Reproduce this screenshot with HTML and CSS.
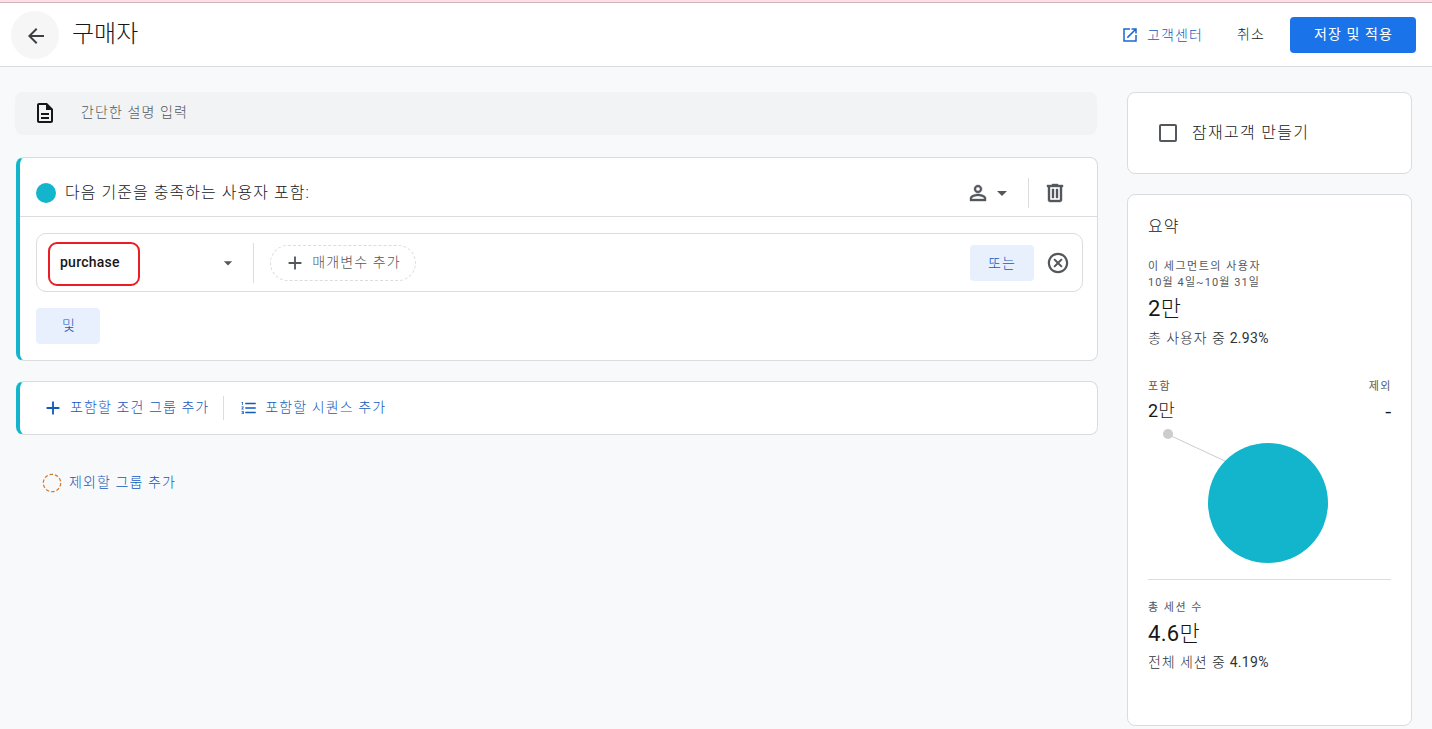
FILE: index.html
```html
<!DOCTYPE html>
<html lang="ko">
<head>
    <meta charset="UTF-8">
    <title>구매자</title>
    <link rel="stylesheet" href="styles.css">
</head>
<body>
    <header class="header">
        <button class="back-button">
            <svg width="24" height="24" viewBox="0 0 24 24"><path d="M20 11H7.83l5.59-5.59L12 4l-8 8 8 8 1.41-1.41L7.83 13H20z"/></svg>
        </button>
        <h1 class="title">구매자</h1>
        <div class="header-actions">
            <a class="help-link">
                <svg width="18" height="18" viewBox="0 0 24 24"><path d="M19 19H5V5h7V3H3v18h18v-9h-2zM14 3v2h3.59l-9.83 9.83 1.41 1.41L19 6.41V10h2V3z"/></svg>
                <span>고객센터</span>
            </a>
            <button class="cancel-button">취소</button>
            <button class="save-button">저장 및 적용</button>
        </div>
    </header>

    <main class="content">
        <div class="builder">
            <div class="description">
                <svg width="24" height="24" viewBox="0 0 24 24"><path d="M8 16h8v2H8zm0-4h8v2H8zm6-10H6c-1.1 0-2 .9-2 2v16c0 1.1.89 2 1.99 2H18c1.1 0 2-.9 2-2V8zm4 18H6V4h7v5h5z"/></svg>
                <span>간단한 설명 입력</span>
            </div>

            <section class="card group">
                <div class="group-header">
                    <span class="dot"></span>
                    <h2 class="group-title">다음 기준을 충족하는 사용자 포함:</h2>
                    <div class="scope">
                        <svg class="bold-icon" width="24" height="24" viewBox="0 0 24 24"><path d="M12 5.9a2.1 2.1 0 110 4.2 2.1 2.1 0 010-4.2m0 9c2.97 0 6.1 1.46 6.1 2.1v1.1H5.9V17c0-.64 3.13-2.1 6.1-2.1M12 4C9.79 4 8 5.79 8 8s1.79 4 4 4 4-1.79 4-4-1.79-4-4-4zm0 9c-2.67 0-8 1.34-8 4v3h16v-3c0-2.66-5.33-4-8-4z"/></svg>
                        <svg width="24" height="24" viewBox="0 0 24 24"><path d="M7 10l5 5 5-5z"/></svg>
                    </div>
                    <div class="delete">
                        <svg class="bold-icon" width="24" height="24" viewBox="0 0 24 24"><path d="M15 4V3H9v1H4v2h1v13c0 1.1.9 2 2 2h10c1.1 0 2-.9 2-2V6h1V4zm2 15H7V6h10zM9 8h2v9H9zm4 0h2v9h-2z"/></svg>
                    </div>
                </div>
                <div class="group-body">
                    <div class="condition">
                        <div class="event">
                            <span class="event-name">purchase</span>
                            <svg class="arrow" width="20" height="20" viewBox="0 0 24 24"><path d="M7 10l5 5 5-5z"/></svg>
                        </div>
                        <button class="add-parameter">
                            <svg width="22" height="22" viewBox="0 0 24 24"><path d="M19 13h-6v6h-2v-6H5v-2h6V5h2v6h6z"/></svg>
                            <span>매개변수 추가</span>
                        </button>
                        <button class="tonal-button or-button">또는</button>
                        <svg class="remove" width="24" height="24" viewBox="0 0 24 24"><path d="M15.2 7.4L12 10.59 8.8 7.4 7.4 8.8 10.59 12 7.4 15.2l1.4 1.4L12 13.41l3.2 3.19 1.4-1.4L13.41 12l3.19-3.2zM12 1.8C6.4 1.8 1.8 6.4 1.8 12s4.6 10.2 10.2 10.2 10.2-4.600 10.200-10.200S17.600 1.800 12 1.800zm0 18.200c-4.410 0-8-3.590-8-8s3.590-8 8-8 8 3.590 8 8-3.590 8-8 8z"/></svg>
                    </div>
                    <button class="tonal-button">및</button>
                </div>
            </section>

            <section class="card group add-row">
                <a class="add-link">
                    <svg width="22" height="22" viewBox="0 0 24 24"><path d="M19 13h-6v6h-2v-6H5v-2h6V5h2v6h6z"/></svg>
                    <span>포함할 조건 그룹 추가</span>
                </a>
                <a class="add-link sequence">
                    <svg width="18" height="18" viewBox="0 0 24 24"><path d="M2 17h2v.5H3v1h1v.5H2v1h3v-4H2zm1-9h1V4H2v1h1zm-1 3h1.8L2 13.1v.9h3v-1H3.2L5 10.9V10H2zm5-6v2h14V5zm0 14h14v-2H7zm0-6h14v-2H7z"/></svg>
                    <span>포함할 시퀀스 추가</span>
                </a>
            </section>

            <a class="add-link exclude">
                <svg width="20" height="20" viewBox="0 0 20 20"><circle cx="10" cy="10" r="8.7"/></svg>
                <span>제외할 그룹 추가</span>
            </a>
        </div>

        <aside class="sidebar">
            <label class="card audience">
                <span class="checkbox"></span>
                <span>잠재고객 만들기</span>
            </label>

            <section class="card summary">
                <h2 class="summary-title">요약</h2>
                <div class="caption">이 세그먼트의 사용자</div>
                <div class="caption dates">10월 4일~10월 31일</div>
                <div class="metric">2<span>만</span></div>
                <div class="ratio"><span>총 사용자 중</span> 2.93%</div>
                <div class="split">
                    <div>
                        <div class="caption">포함</div>
                        <div class="split-value">2<span>만</span></div>
                    </div>
                    <div class="excluded">
                        <div class="caption">제외</div>
                        <div class="split-value dash">-</div>
                    </div>
                </div>
                <svg class="chart" width="243" height="152" viewBox="0 0 243 152">
                    <path d="M20 7.5L78 34.5" stroke="#ccc"/>
                    <circle cx="20" cy="7" r="5" fill="#ccc"/>
                    <circle cx="120" cy="76" r="60" fill="#12b5cb"/>
                </svg>
                <div class="sessions">
                    <div class="caption">총 세션 수</div>
                    <div class="metric">4.6<span>만</span></div>
                    <div class="ratio"><span>전체 세션 중</span> 4.19%</div>
                </div>
            </section>
        </aside>
    </main>
</body>
</html>
```
FILE: styles.css
```css
:root {
    --blue: #1a73e8;
    --link: #1259bd;
    --teal: #12b5cb;
    --border: #dadce0;
    --text: #16171a;
    --muted: #54585d;
}

* {
    box-sizing: border-box;
}

body {
    margin: 0;
    height: 729px;
    overflow: hidden;
    background: #f8f9fb;
    color: var(--text);
    font-family: Roboto, "Noto Sans CJK KR", sans-serif;
    font-size: 14px;
    font-weight: 300;
    letter-spacing: 1.1px;
}

svg {
    display: block;
    flex: none;
    fill: currentColor;
}

h1, h2 {
    margin: 0;
    font-weight: 300;
}

button {
    padding: 0;
    border: none;
    background: none;
    color: inherit;
    font: inherit;
    letter-spacing: inherit;
}

.header {
    display: flex;
    align-items: center;
    height: 67px;
    padding: 0 16px 0 11px;
    background: #fff;
    border-top: 2px solid #ffdfe6;
    border-bottom: 1px solid var(--border);
    box-shadow: inset 0 1px #cfb3bb;
}

.back-button {
    width: 48px;
    height: 48px;
    margin-top: 2px;
    padding: 13px 0 0 13px;
    border-radius: 50%;
    background: #f6f6f6;
    color: #3c4043;
}

.back-button svg {
    margin-bottom: 11px;
}

.title {
    margin: 0 0 0 13px;
    font-size: 24px;
    line-height: 32px;
    letter-spacing: 0;
}

.header-actions {
    display: flex;
    align-items: center;
    margin-left: auto;
    margin-top: 2px;
}

.help-link {
    display: flex;
    align-items: center;
    gap: 8px;
    color: var(--link);
}

.help-link svg {
    color: #1967d2;
}

.help-link span {
    padding-bottom: 3px;
}

.cancel-button {
    margin: 0 25px 0 34px;
    padding-bottom: 4px;
}

.save-button {
    width: 126px;
    height: 36px;
    padding: 0 0 4px 1px;
    border-radius: 4px;
    background: var(--blue);
    color: #fff;
    font-weight: 400;
}

.content {
    display: flex;
    align-items: flex-start;
    justify-content: space-between;
    padding: 25px 20px 0 16px;
}

.builder {
    width: 1082px;
}

.card {
    background: #fff;
    border: 1px solid var(--border);
    border-radius: 8px;
}

.description {
    display: flex;
    align-items: center;
    gap: 24px;
    height: 43px;
    margin: 0 1px 22px -1px;
    padding: 0 0 2px 18px;
    border-radius: 8px;
    background: #f1f3f4;
    color: var(--muted);
}

.description svg {
    color: var(--text);
}

.description span {
    padding-bottom: 4px;
}

.group {
    margin-bottom: 20px;
    border-left: 4px solid var(--teal);
}

.group-header {
    display: flex;
    align-items: center;
    height: 59px;
    padding: 12px 30px 0 16px;
    border-bottom: 1px solid var(--border);
    color: var(--muted);
}

.bold-icon {
    stroke: currentColor;
    stroke-width: 0.4;
}

.dot {
    width: 20px;
    height: 20px;
    border-radius: 50%;
    background: var(--teal);
}

.group-title {
    margin-left: 9px;
    padding-bottom: 4px;
    color: var(--text);
    font-size: 16px;
    letter-spacing: 1.05px;
}

.scope {
    display: flex;
    margin-left: auto;
    padding-right: 14px;
}

.delete {
    padding: 3px 0 3px 14px;
    border-left: 1px solid var(--border);
}

.group-body {
    padding: 16px 14px 16px 16px;
}

.condition {
    display: flex;
    align-items: center;
    height: 59px;
    margin-bottom: 16px;
    padding: 0 12px 0 11px;
    border: 1px solid var(--border);
    border-radius: 10px;
}

.event {
    display: flex;
    align-items: center;
    width: 206px;
    height: 40px;
    border-right: 1px solid var(--border);
}

.event-name {
    width: 92px;
    height: 44px;
    margin: 2px auto 0 0;
    padding-left: 10px;
    border: 2px solid #ea1c24;
    border-radius: 9px;
    font-weight: 500;
    line-height: 37px;
    letter-spacing: 0.25px;
}

.arrow {
    margin-right: 15px;
    color: var(--muted);
}

.add-parameter {
    display: flex;
    align-items: center;
    justify-content: center;
    gap: 6px;
    width: 146px;
    height: 36px;
    margin-left: 16px;
    padding-right: 1px;
    border: 1px dashed var(--border);
    border-radius: 18px;
    color: var(--muted);
}

.add-parameter span {
    padding-bottom: 3px;
}

.tonal-button {
    display: block;
    width: 64px;
    height: 36px;
    padding: 0 0 4px 2px;
    border-radius: 4px;
    background: #e8f0fe;
    color: var(--link);
}

.or-button {
    margin-left: auto;
    margin-right: 12px;
    padding: 0 0 2px;
}

.remove {
    color: var(--muted);
}

.add-row {
    display: flex;
    align-items: center;
    height: 54px;
    padding-left: 22px;
}

.add-link {
    display: flex;
    align-items: center;
    gap: 6px;
    color: var(--link);
}

.add-link span {
    padding-bottom: 4px;
}

.sequence {
    gap: 7px;
    height: 24px;
    margin-left: 14px;
    padding-left: 16px;
    border-left: 1px solid var(--border);
}

.exclude {
    gap: 7px;
    margin: 36px 0 0 26px;
}

.exclude circle {
    fill: none;
    stroke: #d27a2c;
    stroke-width: 1.2;
    stroke-dasharray: 3.5 1.97;
}

.sidebar {
    width: 285px;
}

.audience {
    display: flex;
    align-items: center;
    gap: 15px;
    height: 82px;
    margin-bottom: 20px;
    padding-left: 31px;
    font-size: 16px;
    letter-spacing: 1.3px;
}

.audience span:last-child {
    padding-bottom: 4px;
}

.checkbox {
    width: 18px;
    height: 18px;
    border: 2px solid var(--muted);
    border-radius: 2px;
}

.summary {
    height: 532px;
    padding: 20px 20px;
}

.summary-title {
    margin-bottom: 20px;
    font-size: 16px;
    line-height: 24px;
}

.caption {
    color: var(--muted);
    font-size: 11px;
    font-weight: 400;
    line-height: 16px;
    letter-spacing: 1.5px;
}

.dates {
    letter-spacing: 1.1px;
}

.metric {
    font-size: 22px;
    font-weight: 400;
    line-height: 36px;
    letter-spacing: 0.3px;
}

.metric span,
.ratio span,
.split-value span {
    font-weight: 300;
}

.ratio {
    margin-top: -1px;
    color: #303336;
    font-weight: 400;
    line-height: 24px;
    letter-spacing: 0.3px;
}

.ratio span {
    letter-spacing: 0.95px;
}

.split {
    display: flex;
    justify-content: space-between;
    margin-top: 29px;
}

.excluded {
    text-align: right;
}

.excluded .caption {
    margin-right: -1px;
}

.split-value {
    font-size: 18px;
    font-weight: 400;
    line-height: 32px;
    letter-spacing: 0;
}

.dash {
    padding-top: 1px;
    line-height: 31px;
    transform: scaleX(1.2);
    transform-origin: right;
}

.sessions {
    padding-top: 20px;
    border-top: 1px solid var(--border);
}

.sessions .ratio {
    margin-top: -2px;
}
```
